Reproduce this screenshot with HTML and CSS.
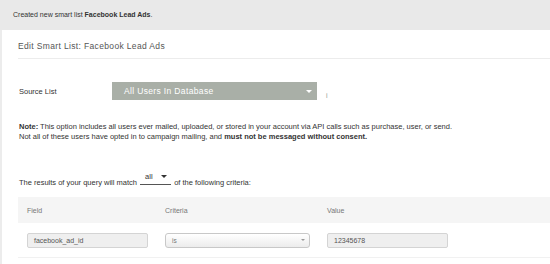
FILE: index.html
```html
<!DOCTYPE html>
<html lang="en">
<head>
    <meta charset="UTF-8">
    <title>Edit Smart List</title>
    <link rel="stylesheet" href="styles.css">
</head>
<body>
    <div class="flash">Created new smart list <b>Facebook Lead Ads</b>.</div>
    <div class="page">
        <div class="panel">
            <div class="panel-title">Edit Smart List: Facebook Lead Ads</div>

            <div class="source-row">
                <div class="source-label">Source List</div>
                <div class="source-select">
                    <span>All Users In Database</span>
                    <span class="caret"></span>
                </div>
                <span class="info">i</span>
            </div>

            <p class="note">
                <b>Note:</b> This option includes all users ever mailed, uploaded, or stored in your account via API calls such as purchase, user, or send.<br>
                Not all of these users have opted in to campaign mailing, and <b>must not be messaged without consent.</b>
            </p>

            <p class="match">
                The results of your query will match
                <span class="match-select">all<span class="caret dark"></span></span>
                of the following criteria:
            </p>

            <div class="criteria">
                <div class="criteria-head">
                    <div class="col-field">Field</div>
                    <div class="col-criteria">Criteria</div>
                    <div class="col-value">Value</div>
                </div>
                <div class="criteria-row">
                    <div class="col-field"><div class="field-input">facebook_ad_id</div></div>
                    <div class="col-criteria">
                        <div class="criteria-select"><span>is</span><span class="caret small"></span></div>
                    </div>
                    <div class="col-value"><div class="field-input">12345678</div></div>
                </div>
            </div>
        </div>
    </div>
</body>
</html>
```

FILE: styles.css
```css
body {
    margin: 0;
    font-family: 'Liberation Sans', Arial, sans-serif;
    color: #333;
    background-color: #ebebeb;
}

.flash {
    height: 30px;
    line-height: 30px;
    padding-left: 13px;
    font-size: 7px;
    color: #333;
    background-color: #e9e9e9;
}

.page {
    padding-left: 2px;
    background-color: #ececec;
}

.panel {
    background-color: #fff;
    padding-left: 16px;
    height: 234px;
    overflow: hidden;
}

.panel-title {
    padding-top: 10px;
    height: 18px;
    line-height: 12px;
    font-size: 8.5px;
    letter-spacing: 0.35px;
    color: #555;
    border-bottom: 1px solid #ececec;
}

.source-row {
    display: flex;
    align-items: center;
    margin-top: 23px;
    height: 18px;
}

.source-label {
    width: 93px;
    padding-left: 1px;
    font-size: 7.5px;
    color: #333;
}

.source-select {
    width: 205px;
    height: 18px;
    box-sizing: border-box;
    display: flex;
    align-items: center;
    justify-content: space-between;
    padding: 0 4px 0 12px;
    background-color: #a9afa7;
    color: #fff;
    font-size: 8.5px;
    letter-spacing: 0.35px;
}

.caret {
    width: 0;
    height: 0;
    border-left: 3px solid transparent;
    border-right: 3px solid transparent;
    border-top: 3px solid #fff;
    margin-right: 1px;
}

.caret.dark {
    display: inline-block;
    border-top-color: #333;
    margin: 0 0 1px 8px;
}

.caret.small {
    border-left-width: 2px;
    border-right-width: 2px;
    border-top: 2px solid #999;
    margin-right: 4px;
}

.info {
    margin: 9px 0 0 9px;
    font-size: 7px;
    color: #999;
}

.note {
    margin: 22px 0 0;
    padding-left: 1px;
    font-size: 7.5px;
    line-height: 10px;
    color: #333;
}

.match {
    margin: 31px 0 0;
    padding-left: 1px;
    font-size: 7.5px;
    line-height: 16px;
    color: #333;
}

.match-select {
    display: inline-block;
    width: 31px;
    box-sizing: border-box;
    padding: 0 0 3px 5px;
    margin: 0 1px;
    line-height: 8px;
    border-bottom: 1px solid #555;
    vertical-align: 6px;
}

.criteria {
    margin-top: 6px;
    font-size: 7px;
}

.criteria-head {
    display: flex;
    align-items: center;
    height: 26px;
    background-color: #f5f5f5;
    color: #777;
}

.criteria-row {
    display: flex;
    align-items: center;
    height: 34px;
    border-bottom: 1px solid #f1f1f1;
}

.col-field {
    width: 138px;
    padding-left: 9px;
}

.col-criteria {
    width: 162px;
}

.col-value {
    flex: 1;
}

.field-input {
    width: 121px;
    height: 15px;
    box-sizing: border-box;
    padding-left: 6px;
    line-height: 13px;
    background-color: #efefef;
    border: 1px solid #d4d4d4;
    border-radius: 2px;
    color: #555;
}

.criteria-select {
    width: 145px;
    height: 15px;
    box-sizing: border-box;
    display: flex;
    align-items: center;
    justify-content: space-between;
    padding-left: 6px;
    background: linear-gradient(#ffffff, #ececec);
    border: 1px solid #c8c8c8;
    border-radius: 3px;
    color: #777;
    font-size: 6.5px;
}
```
